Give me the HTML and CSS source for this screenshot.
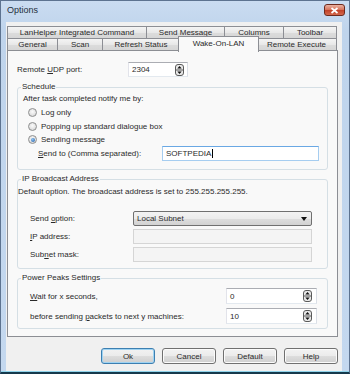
FILE: index.html
```html
<!DOCTYPE html>
<html>
<head>
<meta charset="utf-8">
<link rel="stylesheet" href="styles.css">
</head>
<body>
<div class="window">
  <div class="titlebar">
    <span class="title">Options</span>
    <div class="close"><svg width="9" height="7" viewBox="0 0 9 7"><path d="M1.5 1 L7.5 6 M7.5 1 L1.5 6" stroke="#fff" stroke-width="1.7"/></svg></div>
  </div>
  <div class="client">
    <div class="tabs">
      <div class="tabrow">
        <div class="tab t-lan">LanHelper Integrated Command</div>
        <div class="tab t-send">Send Message</div>
        <div class="tab t-col">Columns</div>
        <div class="tab t-tool">Toolbar</div>
      </div>
      <div class="tabrow">
        <div class="tab t-gen">General</div>
        <div class="tab t-scan">Scan</div>
        <div class="tab t-ref">Refresh Status</div>
        <div class="tab t-wol sel">Wake-On-LAN</div>
        <div class="tab t-rem">Remote Execute</div>
      </div>
    </div>
    <div class="panel">
      <div class="row udp">
        <span class="lbl lbl-udp">Remote <u>U</u>DP port:</span>
        <div class="edit edit-udp"><span class="val">2304</span><svg class="spin" width="9" height="12" viewBox="0 0 9 12"><rect x="0.5" y="0.5" width="8" height="11" rx="2.5" fill="#e9e9e9" stroke="#5a5a5a"/><line x1="1" y1="6" x2="8" y2="6" stroke="#5a5a5a"/><path d="M2.3 4.6 L4.5 2.1 L6.7 4.6Z" fill="#111"/><path d="M2.3 7.4 L4.5 9.9 L6.7 7.4Z" fill="#111"/></svg></div>
      </div>

      <fieldset class="group g-sched">
        <legend>Schedule</legend>
        <div class="note">After task completed notify me by:</div>
        <div class="radio r1"><span class="dot"></span>Log only</div>
        <div class="radio r2"><span class="dot"></span>Popping up standard dialogue box</div>
        <div class="radio r3"><span class="dot on"></span>Sending message</div>
        <div class="row sendto">
          <span class="lbl lbl-send"><u>S</u>end to (Comma separated):</span>
          <div class="edit edit-send focus"><span class="val caret">SOFTPEDIA</span></div>
        </div>
      </fieldset>

      <fieldset class="group g-ip">
        <legend>IP Broadcast Address</legend>
        <div class="note note-ip">Default option. The broadcast address is set to 255.255.255.255.</div>
        <div class="row iprow first">
          <span class="lbl lbl-ip">Send <u>o</u>ption:</span>
          <div class="select"><span>Local Subnet</span><svg width="6" height="4" viewBox="0 0 6 4"><path d="M0 0H6L3 4Z" fill="#111"/></svg></div>
        </div>
        <div class="row iprow">
          <span class="lbl lbl-ip"><u>I</u>P address:</span>
          <div class="edit edit-ip disabled"></div>
        </div>
        <div class="row iprow">
          <span class="lbl lbl-ip">Sub<u>n</u>et mask:</span>
          <div class="edit edit-ip disabled"></div>
        </div>
      </fieldset>

      <fieldset class="group g-power">
        <legend>Power Peaks Settings</legend>
        <div class="row prow first">
          <span class="lbl lbl-pow"><u>W</u>ait for x seconds,</span>
          <div class="edit edit-pow"><span class="val">0</span><svg class="spin" width="9" height="12" viewBox="0 0 9 12"><rect x="0.5" y="0.5" width="8" height="11" rx="2.5" fill="#e9e9e9" stroke="#5a5a5a"/><line x1="1" y1="6" x2="8" y2="6" stroke="#5a5a5a"/><path d="M2.3 4.6 L4.5 2.1 L6.7 4.6Z" fill="#111"/><path d="M2.3 7.4 L4.5 9.9 L6.7 7.4Z" fill="#111"/></svg></div>
        </div>
        <div class="row prow">
          <span class="lbl lbl-pow">before sending <u>p</u>ackets to next y machines:</span>
          <div class="edit edit-pow"><span class="val">10</span><svg class="spin" width="9" height="12" viewBox="0 0 9 12"><rect x="0.5" y="0.5" width="8" height="11" rx="2.5" fill="#e9e9e9" stroke="#5a5a5a"/><line x1="1" y1="6" x2="8" y2="6" stroke="#5a5a5a"/><path d="M2.3 4.6 L4.5 2.1 L6.7 4.6Z" fill="#111"/><path d="M2.3 7.4 L4.5 9.9 L6.7 7.4Z" fill="#111"/></svg></div>
        </div>
      </fieldset>
    </div>
    <div class="buttons">
      <div class="btn default">Ok</div>
      <div class="btn">Cancel</div>
      <div class="btn">Default</div>
      <div class="btn">Help</div>
    </div>
  </div>
</div>
</body>
</html>
```

FILE: styles.css
```css
* { box-sizing: border-box; }
html, body { margin: 0; padding: 0; }
body {
  width: 350px;
  height: 374px;
  overflow: hidden;
  font-family: "Liberation Sans", Arial, sans-serif;
  font-size: 8px;
  color: #2a2a2a;
  background: #c4d8ef;
}
u { text-decoration: underline; }

.window {
  width: 350px;
  height: 374px;
  display: flex;
  flex-direction: column;
  background: linear-gradient(#cadcf1, #bfd4ec 30px, #c4d8ef);
  border: 1px solid #5d7390;
  border-bottom: 2px solid #15394c;
  box-shadow: inset 0 -1px 0 #8fd3ea;
}

.titlebar {
  height: 21px;
  flex: 0 0 21px;
  display: flex;
  justify-content: space-between;
  align-items: flex-start;
  padding: 0 4px 0 6px;
}
.title {
  font-size: 9px;
  color: #24303d;
  line-height: 18px;
}
.close {
  margin-top: 3px;
  width: 21px;
  height: 12px;
  border: 1px solid #6e2a1d;
  border-radius: 3px;
  background: linear-gradient(#eab2a2, #d8775f 45%, #c2432a 55%, #d3674c);
  display: flex;
  align-items: center;
  justify-content: center;
}

.client {
  flex: 1;
  margin: 0 7px 1px 5px;
  background: #f0f0f0;
  padding: 4px 4px 0 1px;
  display: flex;
  flex-direction: column;
}

.tabs { width: 330px; }
.tabrow { display: flex; height: 12px; }
.tab {
  height: 12px;
  border: 1px solid #8c8e94;
  border-left: none;
  border-bottom: none;
  background: linear-gradient(#f4f4f4, #e8e8e8 50%, #dcdcdc 51%, #d6d6d6);
  display: flex;
  align-items: center;
  justify-content: center;
  line-height: 1;
  white-space: nowrap;
}
.tab:first-child { border-left: 1px solid #8c8e94; }
.t-lan { width: 140px; }
.t-send { width: 78px; }
.t-col { width: 59px; }
.t-tool { width: 53px; }
.t-gen { width: 51px; }
.t-scan { width: 45px; }
.t-ref { width: 77px; }
.t-wol { width: 77px; }
.t-rem { width: 80px; }
.tab.sel {
  position: relative;
  z-index: 1;
  width: 81px;
  height: 16px;
  margin: -2px -2px 0 -2px;
  border-left: 1px solid #8c8e94;
  background: #f9f9f9;
  align-items: flex-start;
  padding-top: 3px;
}

.panel {
  height: 287px;
  flex: 0 0 287px;
  width: 331px;
  border: 1px solid #8c8e94;
  background: #f9f9f9;
  padding: 11px 9px 0 9px;
}

.row { display: flex; align-items: center; }
.lbl { white-space: nowrap; flex: 0 0 auto; }
.udp { height: 15px; }
.lbl-udp { width: 111px; }

.edit {
  height: 100%;
  background: #fff;
  border: 1px solid;
  border-color: #abadb3 #dbdfe6 #e3e9ef #e2e3ea;
  display: flex;
  align-items: center;
  justify-content: space-between;
  padding: 0 3px 0 3px;
}
.edit-udp { width: 60px; }
.edit-send { width: 157px; }
.edit.focus { border-color: #6aa8e4 #a6cdf0 #a6cdf0 #a6cdf0; }
.caret { border-right: 1px solid #000; padding-right: 1px; line-height: 9px; }
.edit.disabled { background: #f4f4f4; border-color: #d5d5d5; }
.edit-ip { width: 179px; }
.edit-pow { width: 91px; padding-right: 4px; }
.spin { display: block; }

.group {
  margin: 5px 0 0 0;
  padding: 0 5px 8px 5px;
  border: 1px solid #d5dfe5;
  border-radius: 3px;
  min-width: 0;
}
.group legend {
  padding: 0 1px;
  margin-left: -2px;
  line-height: 10px;
  font-size: 8px;
  color: #2a2a2a;
}
.g-ip { margin-top: 4px; padding-bottom: 6px; }
.g-power { margin-top: 4px; padding-bottom: 4px; }

.note { height: 13px; line-height: 13px; white-space: nowrap; }
.note-ip { height: 12px; line-height: 12px; margin: 2px 0 0 -5px; }

.radio {
  display: flex;
  align-items: center;
  padding-left: 5px;
  height: 14px;
  white-space: nowrap;
}
.radio.r3 { height: 13px; }
.dot {
  width: 9px;
  height: 9px;
  border-radius: 50%;
  border: 1px solid #8e8f8f;
  background: radial-gradient(circle at 50% 40%, #fbfbfb, #e2e2e2 60%, #cfcfcf);
  margin-right: 4px;
  display: flex;
  align-items: center;
  justify-content: center;
}
.dot.on::after {
  content: "";
  width: 4px;
  height: 4px;
  border-radius: 50%;
  background: radial-gradient(circle at 40% 35%, #8fc3f0, #1d5aa6);
}

.sendto { height: 15px; padding-left: 15px; }
.lbl-send { width: 124px; }

.iprow { height: 15px; margin-top: 3px; padding-left: 7px; }
.iprow.first { margin-top: 13px; }
.lbl-ip { width: 103px; }
.select {
  width: 179px;
  height: 100%;
  border: 1px solid #707070;
  border-radius: 2px;
  background: linear-gradient(#f3f3f3, #ececec 50%, #dedede 51%, #d2d2d2);
  display: flex;
  align-items: center;
  justify-content: space-between;
  padding: 0 4px 0 3px;
}
.select svg { display: block; }

.prow { height: 16px; margin-top: 4px; padding-left: 7px; }
.prow.first { margin-top: 5px; }
.lbl-pow { width: 196px; }

.buttons {
  display: flex;
  justify-content: flex-end;
  gap: 7px;
  margin-top: 11px;
}
.btn {
  width: 54px;
  height: 16px;
  border: 1px solid #707070;
  border-radius: 3px;
  background: linear-gradient(#f3f3f3, #ebebeb 50%, #dddddd 51%, #cfcfcf);
  display: flex;
  align-items: center;
  justify-content: center;
  box-shadow: inset 0 0 0 1px #fbfbfb;
}
.btn.default {
  border-color: #3c7fb1;
  box-shadow: inset 0 0 0 1px #9fd3f2;
  background: linear-gradient(#f2f2f2, #ebebeb 50%, #dddddd 51%, #cfcfcf);
}
```
